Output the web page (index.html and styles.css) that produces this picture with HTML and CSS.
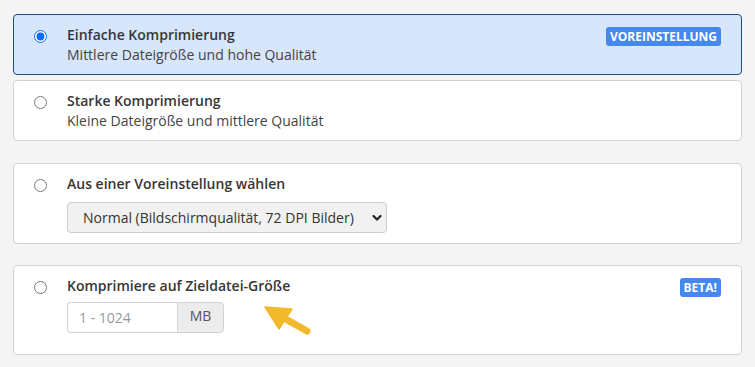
FILE: index.html
```html
<!DOCTYPE html>
<html lang="de">
<head>
<meta charset="utf-8">
<link rel="stylesheet" href="styles.css">
</head>
<body>
<div class="options">
  <label class="card card-active">
    <span class="radio-col"><input type="radio" name="c" checked></span>
    <span class="body">
      <span class="title">Einfache Komprimierung</span>
      <span class="sub">Mittlere Dateigröße und hohe Qualität</span>
    </span>
    <span class="badge">VOREINSTELLUNG</span>
  </label>
  <label class="card card-tight">
    <span class="radio-col"><input type="radio" name="c"></span>
    <span class="body">
      <span class="title">Starke Komprimierung</span>
      <span class="sub">Kleine Dateigröße und mittlere Qualität</span>
    </span>
  </label>

  <div class="card card-sep">
    <span class="radio-col"><input type="radio" name="c"></span>
    <div class="body">
      <span class="title">Aus einer Voreinstellung wählen</span>
      <div class="select-wrap">
        <select class="select">
          <option>Normal (Bildschirmqualität, 72 DPI Bilder)</option>
        </select>
        <svg class="chev" width="10" height="8" viewBox="0 0 10 8"><path d="M1.5 2 L5 5.5 L8.5 2" fill="none" stroke="#222" stroke-width="2.2" stroke-linecap="round" stroke-linejoin="round"/></svg>
      </div>
    </div>
  </div>

  <div class="card card-sep card-target">
    <span class="radio-col"><input type="radio" name="c"></span>
    <div class="body">
      <span class="title">Komprimiere auf Zieldatei-Größe</span>
      <div class="input-group">
        <input class="num" type="text" placeholder="1 - 1024">
        <span class="addon">MB</span>
      </div>
    </div>
    <span class="badge">BETA!</span>
    <svg class="arrow" width="60" height="40" viewBox="0 0 60 40">
      <polygon points="13,9 40,11 27,31" fill="#f2b92c" stroke="#f2b92c" stroke-width="1.5" stroke-linejoin="round"/>
      <line x1="30" y1="19" x2="55" y2="33" stroke="#f2b92c" stroke-width="7" stroke-linecap="round"/>
    </svg>
  </div>
</div>
</body>
</html>
```

FILE: styles.css
```css
* { box-sizing: border-box; }
html, body { margin: 0; }
body {
  background: #f4f4f4;
  font-family: "Open Sans", "Liberation Sans", sans-serif;
  font-size: 14px;
  color: #333;
  padding: 14px 13px 0 13px;
}
.options { display: flex; flex-direction: column; }
.card {
  position: relative;
  display: flex;
  align-items: flex-start;
  background: #fff;
  border: 1px solid #d2d2d2;
  border-radius: 4px;
  padding: 10px 20px 10px 0;
  line-height: 19.5px;
}
.card-active {
  background: #d7e6fb;
  border-color: #1f4d8a;
}
.card-tight { margin-top: 5px; }
.card-sep { margin-top: 22px; }
.card-target { margin-top: 21px; padding-bottom: 11px; }
.radio-col {
  width: 53px;
  display: flex;
  justify-content: center;
  padding-top: 5px;
}
.radio-col input {
  margin: 0;
  width: 13px;
  height: 13px;
  accent-color: #0a6cff;
}
.body { display: flex; flex-direction: column; flex: 1; }
.title { font-weight: 600; color: #363636; }
.sub { color: #444; }
.badge {
  margin-top: 2px;
  background: #4588ee;
  color: #fff;
  font-weight: 700;
  font-size: 12px;
  line-height: 19px;
  height: 19px;
  padding: 0 4px;
  border-radius: 3px;
}
.select-wrap {
  position: relative;
  width: 320px;
  margin-top: 8px;
}
.select {
  appearance: none;
  -webkit-appearance: none;
  width: 100%;
  height: 31px;
  background: #f1f1f1;
  border: 1px solid #cdcdcd;
  border-radius: 4px;
  padding: 0 30px 0 15px;
  font-family: inherit;
  font-size: 14px;
  color: #333;
}
.chev { position: absolute; right: 5px; top: 12px; }
.input-group {
  display: flex;
  margin-top: 7px;
  margin-bottom: 10px;
  height: 31px;
}
.num {
  width: 110px;
  border: 1px solid #d2d2d2;
  border-right: none;
  border-radius: 4px 0 0 4px;
  padding: 0 11px;
  font-family: inherit;
  font-size: 14px;
  color: #333;
  background: #fff;
}
.num::placeholder { color: #999; }
.addon {
  width: 47px;
  display: flex;
  align-items: center;
  justify-content: center;
  background: #ececec;
  border: 1px solid #d2d2d2;
  border-radius: 0 4px 4px 0;
  color: #555;
  padding-bottom: 3px;
}
.arrow { position: absolute; left: 238px; top: 32px; }
```
